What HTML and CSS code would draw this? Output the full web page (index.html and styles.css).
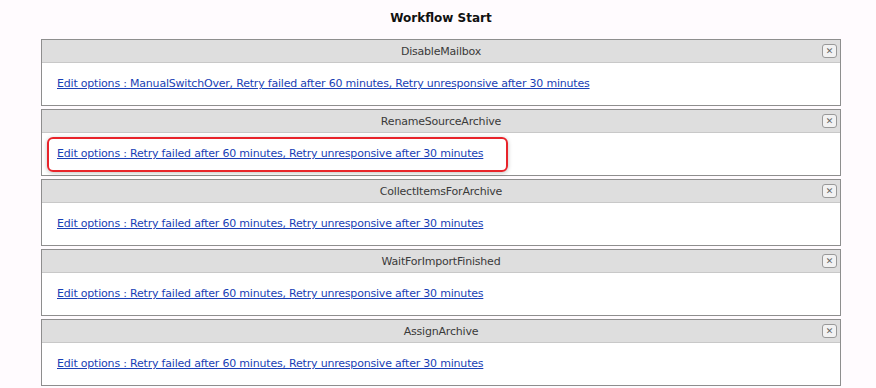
FILE: index.html
```html
<!DOCTYPE html>
<html lang="en">
<head>
    <meta charset="UTF-8">
    <title>Workflow Start</title>
    <link rel="stylesheet" href="styles.css">
</head>
<body>
    <h1 class="page-title">Workflow Start</h1>

    <div class="workflow">
        <div class="step">
            <div class="step-header">
                <span class="step-name">DisableMailbox</span>
                <span class="close-btn">&#x2715;</span>
            </div>
            <div class="step-body">
                <a href="#">Edit options : ManualSwitchOver, Retry failed after 60 minutes, Retry unresponsive after 30 minutes</a>
            </div>
        </div>

        <div class="step">
            <div class="step-header">
                <span class="step-name">RenameSourceArchive</span>
                <span class="close-btn">&#x2715;</span>
            </div>
            <div class="step-body">
                <a href="#">Edit options : Retry failed after 60 minutes, Retry unresponsive after 30 minutes</a>
                <!-- annotation box drawn over the link -->
                <div class="callout"></div>
            </div>
        </div>

        <div class="step">
            <div class="step-header">
                <span class="step-name">CollectItemsForArchive</span>
                <span class="close-btn">&#x2715;</span>
            </div>
            <div class="step-body">
                <a href="#">Edit options : Retry failed after 60 minutes, Retry unresponsive after 30 minutes</a>
            </div>
        </div>

        <div class="step">
            <div class="step-header">
                <span class="step-name">WaitForImportFinished</span>
                <span class="close-btn">&#x2715;</span>
            </div>
            <div class="step-body">
                <a href="#">Edit options : Retry failed after 60 minutes, Retry unresponsive after 30 minutes</a>
            </div>
        </div>

        <div class="step">
            <div class="step-header">
                <span class="step-name">AssignArchive</span>
                <span class="close-btn">&#x2715;</span>
            </div>
            <div class="step-body">
                <a href="#">Edit options : Retry failed after 60 minutes, Retry unresponsive after 30 minutes</a>
            </div>
        </div>
    </div>
</body>
</html>
```

FILE: styles.css
```css
body {
    margin: 0;
    background-color: #fffbfe;
    font-family: "DejaVu Sans", Verdana, sans-serif;
    font-size: 11px;
    letter-spacing: -0.2px;
    color: #333;
}
.page-title {
    margin: 0;
    height: 39px;
    line-height: 37px;
    font-size: 12px;
    font-weight: bold;
    letter-spacing: 0;
    color: #111;
    text-align: center;
    width: 800px;
    margin-left: 41px;
}
.workflow {
    width: 800px;
    margin-left: 41px;
    display: flex;
    flex-direction: column;
    gap: 3px;
}
.step {
    border: 1px solid #8e8e8e;
    background: white;
}
.step-header {
    height: 22px;
    background-color: #dedede;
    border-bottom: 1px solid #c8c8c8;
    display: grid;
    grid-template-columns: 1fr auto 1fr;
    align-items: center;
}
.step-name {
    grid-column: 2;
    color: #3a3a3a;
}
.close-btn {
    grid-column: 3;
    justify-self: end;
    margin-right: 3px;
    width: 13px;
    height: 12px;
    border: 1px solid #999;
    border-radius: 3px;
    background: #f2f2f2;
    color: #666;
    font-size: 9px;
    font-weight: bold;
    line-height: 12px;
    text-align: center;
}
.step-body {
    position: relative;
    height: 42px;
    padding-left: 15px;
    display: flex;
    align-items: center;
}
.step-body a {
    color: #1a3fb5;
    margin-top: -1px;
}
.callout {
    position: absolute;
    left: 5px;
    top: 4px;
    width: 457px;
    height: 31px;
    border: 2px solid #e8242b;
    border-radius: 6px;
    box-shadow: 0 1px 4px rgba(0,0,0,0.25);
}
```
